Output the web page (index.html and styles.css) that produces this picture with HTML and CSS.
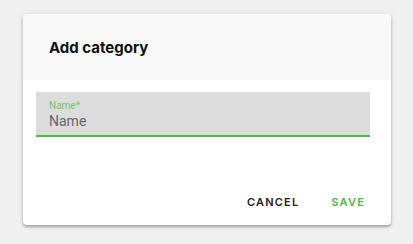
FILE: index.html
```html
<!DOCTYPE html>
<html>
<head>
    <meta charset="UTF-8">
    <title>Add category</title>
    <link rel="stylesheet" href="styles.css">
</head>
<body>

<div class="dialog">
    <div class="dialog-title">
        <h2>Add category</h2>
    </div>
    <div class="dialog-content">
        <div class="field">
            <label for="name">Name*</label>
            <input type="text" id="name" name="name" placeholder="Name">
        </div>
    </div>
    <div class="dialog-actions">
        <button type="button" class="btn">Cancel</button>
        <button type="button" class="btn btn-primary">Save</button>
    </div>
</div>

</body>
</html>
```

FILE: styles.css
```css
body {
    margin: 0;
    padding: 14px 22px 20px 23px;
    background-color: #f0f0f0;
    font-family: Roboto, "Liberation Sans", sans-serif;
}

.dialog {
    background-color: white;
    border-radius: 4px;
    box-shadow: 0 2px 3px rgba(0, 0, 0, 0.3), 0 0 6px rgba(0, 0, 0, 0.08);
    overflow: hidden;
}

.dialog-title {
    background-color: #f8f8f8;
    height: 65px;
    padding: 1px 26px 0;
    display: flex;
    align-items: center;
}

.dialog-title h2 {
    margin: 0;
    font-family: Inter, Roboto, sans-serif;
    font-size: 15px;
    font-weight: 700;
    color: #111;
}

.dialog-content {
    padding: 12px 21px 38px 13px;
}

.field {
    background-color: #dcdcdc;
    border-bottom: 2px solid #4cb84c;
    height: 43px;
    padding: 0 13px;
    display: flex;
    flex-direction: column;
    justify-content: center;
}

.field label {
    font-size: 10px;
    color: #6cc86c;
    line-height: 12px;
    margin-top: 2px;
}

.field input {
    border: none;
    background: transparent;
    padding: 0;
    margin: 0;
    font-family: Roboto, sans-serif;
    font-size: 14px;
    line-height: 18px;
    color: #555;
    outline: none;
}

.field input::placeholder {
    color: #666;
}

.dialog-actions {
    display: flex;
    justify-content: flex-end;
    gap: 12px;
    padding: 12px 16px 8px;
}

.btn {
    border: none;
    background: none;
    font-family: Inter, Roboto, sans-serif;
    font-size: 11px;
    font-weight: 600;
    letter-spacing: 1.2px;
    text-transform: uppercase;
    color: #222;
    padding: 8px 10px;
    cursor: pointer;
}

.btn-primary {
    color: #4cb84c;
}
```
